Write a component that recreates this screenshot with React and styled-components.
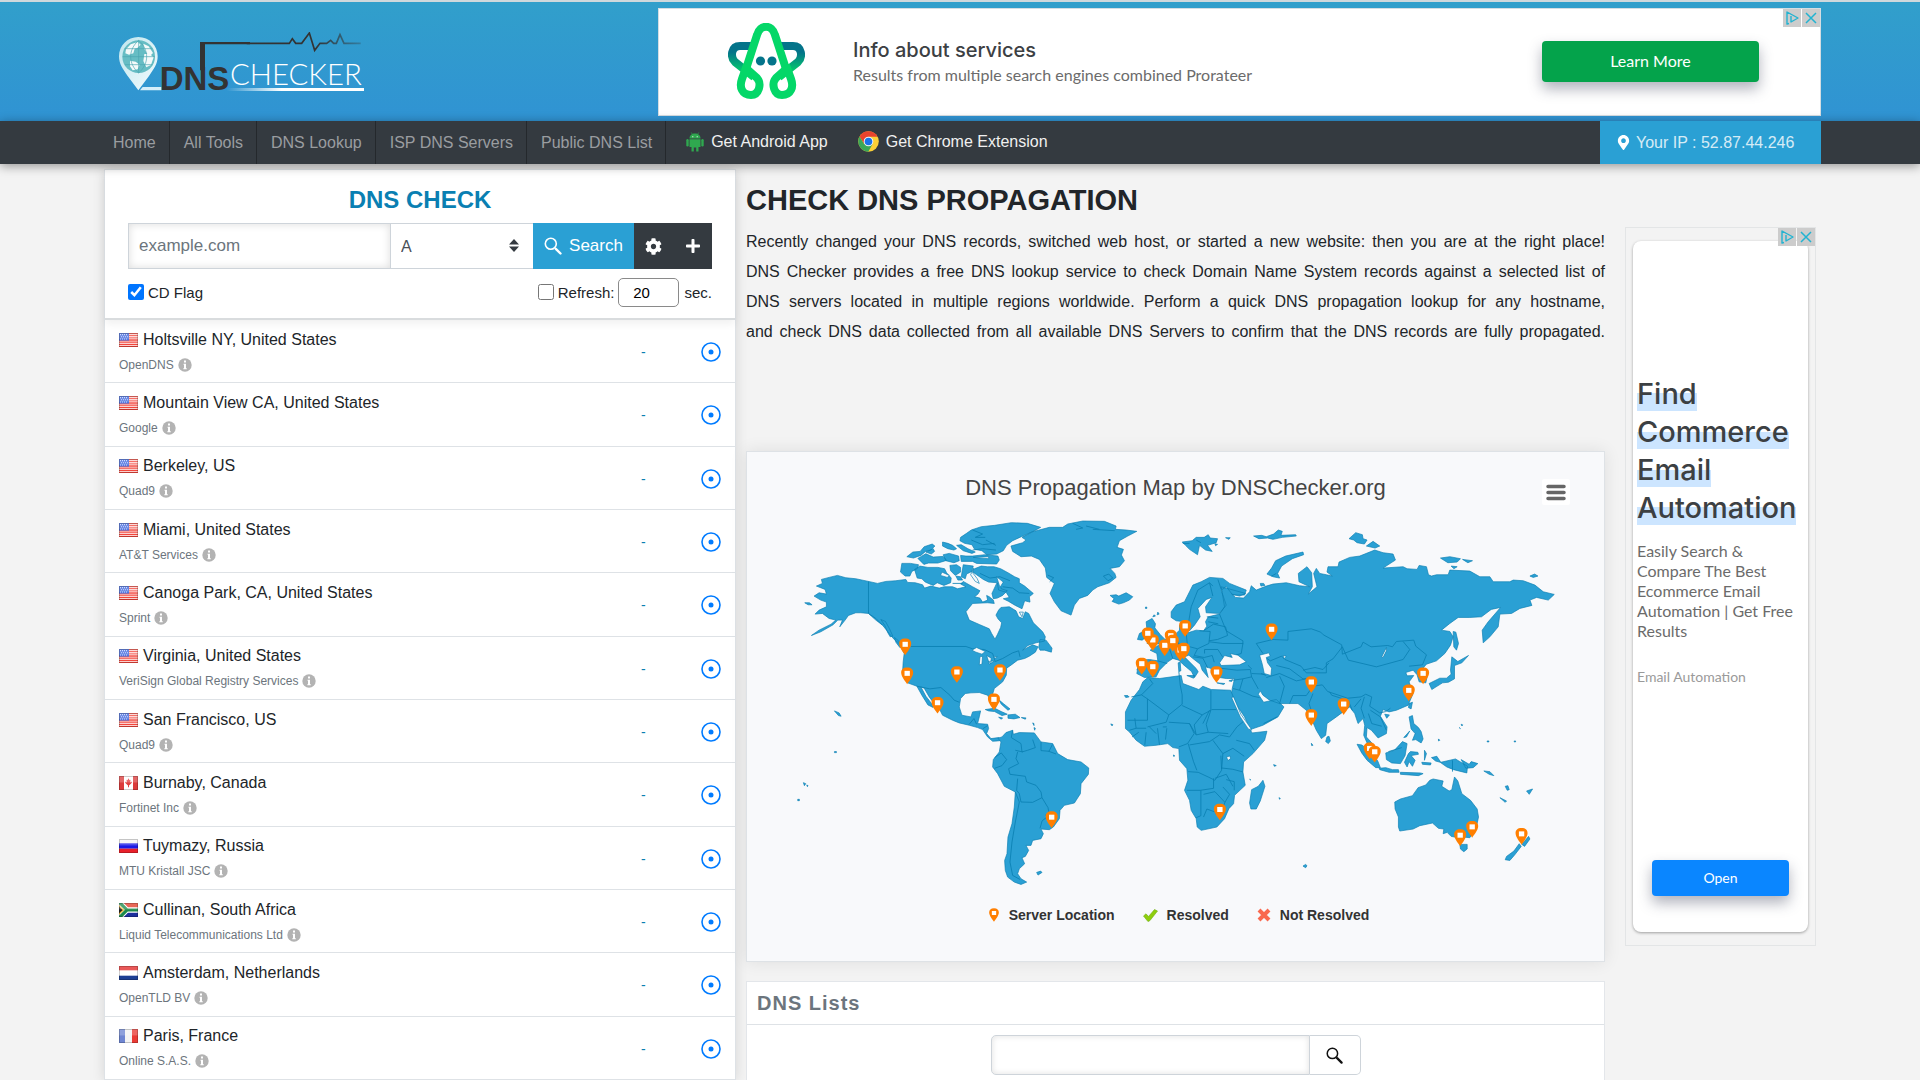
import React from 'react'
import styled, { createGlobalStyle } from 'styled-components'
import { FaCog, FaPlus, FaMapMarkerAlt } from 'react-icons/fa'

const COLORS = {
  blue: '#2aa0d4',
  darkBlue: '#0a7fb2',
  dark: '#343a40',
  border: '#dee2e6',
  text: '#212529',
  muted: '#6c757d',
  link: '#007bff',
  page: '#f3f3f3',
  map: '#f8f9fb',
}

const SANS = '"Liberation Sans", Arial, sans-serif'
const AD_FONT = 'Lato, "Open Sans", sans-serif'
const AD_HEADING = 'Inter, "Open Sans", sans-serif'

const GlobalStyle = createGlobalStyle`
  * {
    box-sizing: border-box;
  }

  body {
    margin: 0;
    color: ${COLORS.text};
    font-size: 16px;
    font-family: ${SANS};
    background: ${COLORS.page};
  }

  h1, h2, p, ul {
    margin: 0;
    padding: 0;
  }

  button, input, select {
    font-size: 16px;
    font-family: inherit;
  }
`

const Page = styled.div`
  height: 100vh;
  overflow: hidden;
`

const Header = styled.header`
  display: flex;
  align-items: center;
  height: 121px;
  padding: 0 99px 0 119px;
  background: linear-gradient(180deg, #319fcb, #3093d3);
  border-top: 2px solid #cfd8dc;

  .logo {
    display: block;
    flex: none;
    width: 246px;
    height: 60px;
  }
`

const Banner = styled.section`
  position: relative;
  display: flex;
  flex: 1;
  align-items: center;
  height: 108px;
  margin-left: 293px;
  padding: 0 61px 0 69px;
  font-family: ${AD_FONT};
  background: #fff;
  border: 1px solid #d5dde2;

  .mascot {
    width: 77px;
    height: 77px;
  }

  .copy {
    flex: 1;
    padding-left: 48px;
  }

  h2 {
    color: #3c4043;
    font-weight: 500;
    font-size: 20px;
    font-family: ${AD_HEADING};
    line-height: 26px;
  }

  p {
    color: #6b6b6b;
    font-size: 16px;
    line-height: 24px;
  }
`

const AdButton = styled.button`
  width: ${(props) => props.$width};
  height: ${(props) => props.$height};
  padding: 0 0 2px;
  color: #fff;
  font-size: ${(props) => props.$fontSize};
  font-family: ${AD_FONT};
  background: ${(props) => props.$color};
  border: 0;
  border-radius: 4px;
  box-shadow: 0 7px 14px rgba(60, 64, 90, 0.4);
`

const AdChoices = styled.div`
  position: absolute;
  top: 0;
  right: 0;
  display: flex;
  gap: 1px;

  button {
    display: flex;
    align-items: center;
    justify-content: center;
    width: 18px;
    height: 18px;
    padding: 0;
    background: #ccc;
    border: 0;
  }
`

const Nav = styled.nav`
  position: relative;
  z-index: 2;
  display: flex;
  align-items: stretch;
  height: 43px;
  padding: 0 99px;
  background: ${COLORS.dark};
  box-shadow: 0 2px 10px rgba(0, 0, 0, 0.4);
`

const NavLink = styled.a`
  display: flex;
  align-items: center;
  padding: 0 13px 0 14px;
  color: #9a9da0;
  text-decoration: none;
  border-right: 1px solid #24282c;
`

const AppLink = styled.a`
  display: flex;
  align-items: center;
  margin-left: ${(props) => props.$gap};
  padding-bottom: 2px;
  color: #f0f0f0;
  text-decoration: none;

  svg {
    margin-right: 7px;
  }
`

const IpBox = styled.div`
  display: flex;
  align-items: center;
  width: 221px;
  margin-left: auto;
  padding-left: 16px;
  color: #fff;
  background: ${COLORS.blue};

  svg {
    margin-right: 5px;
  }

  span {
    opacity: 0.8;
  }
`

const Main = styled.main`
  display: grid;
  grid-template-columns: minmax(0, 632fr) minmax(0, 869fr) 211px;
  align-items: start;
  padding: 0 104px;
`

const CheckPanel = styled.section`
  margin-top: 5px;
  background: #fff;
  border: 1px solid ${COLORS.border};
  box-shadow: 0 0 12px rgba(0, 0, 0, 0.12);
`

const CheckForm = styled.form`
  padding: 16px 23px 11px;
  border-bottom: 2px solid #d9dcde;
  box-shadow: 0 4px 8px rgba(0, 0, 0, 0.06);

  h2 {
    margin-bottom: 10px;
    color: ${COLORS.darkBlue};
    font-weight: bold;
    font-size: 24px;
    line-height: 27px;
    text-align: center;
  }
`

const SearchRow = styled.div`
  display: flex;
  height: 46px;

  input {
    flex: 1;
    min-width: 0;
    padding: 0 10px;
    font-size: 17px;
    border: 1px solid #ced4da;
    box-shadow: inset 0 0 8px rgba(0, 0, 0, 0.14);
  }

  input::placeholder {
    color: ${COLORS.muted};
  }
`

const SelectBox = styled.div`
  position: relative;
  width: 142px;

  select {
    width: 100%;
    height: 100%;
    padding: 0 10px;
    color: #495057;
    font-size: 16px;
    background: #fff;
    border: 1px solid #ced4da;
    border-width: 1px 0;
    appearance: none;
  }

  svg {
    position: absolute;
    top: 16px;
    right: 14px;
    pointer-events: none;
  }
`

const SearchButton = styled.button`
  display: flex;
  align-items: center;
  justify-content: center;
  gap: 7px;
  width: 101px;
  padding: 0;
  color: #fff;
  font-size: 17px;
  background: ${COLORS.blue};
  border: 0;
`

const ToolButton = styled.button`
  width: 39px;
  padding: 4px 0 0;
  color: #fff;
  background: ${COLORS.dark};
  border: 0;
`

const OptionsRow = styled.div`
  display: flex;
  align-items: center;
  height: 30px;
  margin-top: 8px;
  font-size: 15px;

  label {
    display: flex;
    align-items: center;
    gap: 4px;
  }

  label:first-child {
    margin-right: auto;
  }

  input[type='checkbox'] {
    width: 16px;
    height: 16px;
    margin: 0;
    accent-color: #0075ff;
  }

  input[type='number'] {
    width: 61px;
    height: 29px;
    margin: 0 5px 0 4px;
    padding: 0;
    font-size: 15px;
    text-align: center;
    background: #fff;
    border: 1px solid #8a8a8a;
    border-radius: 5px;
    appearance: textfield;
  }
`

const ServerList = styled.ul`
  display: grid;
  grid-auto-rows: 1fr;
  min-height: 760px;
  list-style: none;
`

const ServerRow = styled.li`
  display: flex;
  align-items: center;
  padding: 2px 14px 0 14px;
  border-bottom: 1px solid ${COLORS.border};

  .info {
    flex: 1;
  }

  .name {
    display: flex;
    align-items: center;
    gap: 5px;
    line-height: 24px;
  }

  .owner {
    display: flex;
    align-items: center;
    gap: 4px;
    margin-top: 1px;
    color: ${COLORS.muted};
    font-size: 12px;
    line-height: 24px;
  }

  .result {
    width: 60px;
    color: ${COLORS.darkBlue};
    font-size: 14px;
  }
`

const Content = styled.section`
  margin-left: 10px;

  h1 {
    margin-top: 20px;
    font-size: 29px;
    line-height: 32px;
  }

  .intro {
    height: 209px;
    margin-top: 11px;
    line-height: 30px;
    text-align: justify;
    text-align-last: justify;
  }
`

const MapCard = styled.figure`
  position: relative;
  margin: 15px 0 0;
  padding: 22px 0 36px;
  background: ${COLORS.map};
  border: 1px solid ${COLORS.border};
  box-shadow: 0 0 16px rgba(0, 0, 0, 0.09);

  figcaption {
    color: #444;
    font-size: 22px;
    line-height: 28px;
    text-align: center;
  }

  .map {
    display: block;
    width: 100%;
    margin-top: 13px;
  }
`

const MenuButton = styled.button`
  position: absolute;
  top: 27px;
  right: 34px;
  display: flex;
  align-items: center;
  justify-content: center;
  width: 28px;
  height: 26px;
  padding: 0;
  background: #fff;
  border: 0;
  border-radius: 2px;
`

const Legend = styled.div`
  display: flex;
  justify-content: center;
  margin-top: 15px;
  padding-left: 6px;
  color: #333;
  font-weight: bold;
  font-size: 14px;
  line-height: 20px;

  span {
    display: flex;
    align-items: center;
    gap: 9px;
  }

  span + span {
    margin-left: 28px;
  }
`

const ListsCard = styled.section`
  height: 140px;
  margin-top: 19px;
  background: #fff;
  border: 1px solid #e3e6ea;

  h2 {
    padding: 0 10px;
    color: ${COLORS.muted};
    font-size: 20px;
    line-height: 42px;
    letter-spacing: 1px;
    border-bottom: 1px solid ${COLORS.border};
  }

  form {
    display: flex;
    width: 370px;
    height: 40px;
    margin: 10px auto 0;
  }

  input {
    flex: 1;
    min-width: 0;
    border: 1px solid #ced4da;
    border-radius: 5px 0 0 5px;
    box-shadow: inset 0 0 6px rgba(0, 0, 0, 0.12);
  }

  button {
    width: 51px;
    padding: 4px 0 0;
    background: #fff;
    border: 1px solid #ced4da;
    border-left: 0;
    border-radius: 0 5px 5px 0;
  }
`

const SideAd = styled.aside`
  position: relative;
  margin: 63px 0 0 20px;
  padding: 13px 7px;
  border: 1px solid #e3e5e6;

  .card {
    display: flex;
    flex-direction: column;
    align-items: flex-start;
    height: 691px;
    padding: 134px 4px 36px;
    font-family: ${AD_FONT};
    background: #fff;
    border-radius: 8px;
    box-shadow: 0 1px 3px rgba(0, 0, 0, 0.35);
  }

  h2 {
    color: #3c4043;
    font-weight: 500;
    font-size: 29px;
    font-family: ${AD_HEADING};
    line-height: 38px;
  }

  h2 span {
    background: linear-gradient(transparent 50%, #cce5ff 50%);
  }

  p {
    margin-top: 14px;
    color: #6b6b6b;
    font-size: 16px;
    line-height: 20px;
  }

  small {
    margin-top: 26px;
    color: #9a9a9a;
    font-size: 14px;
    line-height: 20px;
  }

  .card > button {
    align-self: center;
    margin-top: auto;
  }
`

const navItems = [
  'Home',
  'All Tools',
  'DNS Lookup',
  'ISP DNS Servers',
  'Public DNS List',
]

const servers = [
  { flag: 'us', name: 'Holtsville NY, United States', owner: 'OpenDNS' },
  { flag: 'us', name: 'Mountain View CA, United States', owner: 'Google' },
  { flag: 'us', name: 'Berkeley, US', owner: 'Quad9' },
  { flag: 'us', name: 'Miami, United States', owner: 'AT&T Services' },
  { flag: 'us', name: 'Canoga Park, CA, United States', owner: 'Sprint' },
  {
    flag: 'us',
    name: 'Virginia, United States',
    owner: 'VeriSign Global Registry Services',
  },
  { flag: 'us', name: 'San Francisco, US', owner: 'Quad9' },
  { flag: 'ca', name: 'Burnaby, Canada', owner: 'Fortinet Inc' },
  { flag: 'ru', name: 'Tuymazy, Russia', owner: 'MTU Kristall JSC' },
  {
    flag: 'za',
    name: 'Cullinan, South Africa',
    owner: 'Liquid Telecommunications Ltd',
  },
  { flag: 'nl', name: 'Amsterdam, Netherlands', owner: 'OpenTLD BV' },
  { flag: 'fr', name: 'Paris, France', owner: 'Online S.A.S.' },
]

const flags = {
  us: (
    <>
      <path fill="#fff" d="M0 0h19v13H0z" />
      <path
        stroke="#f2463c"
        strokeWidth="1.200"
        d="M0 .5h19M0 2.500h19M0 4.500h19M0 6.500h19M0 8.500h19M0 10.500h19M0 12.500h19"
      />
      <path fill="#3f66dc" d="M0 0h10v7H0z" />
      <path
        stroke="#c5d4ff"
        strokeDasharray="1 1"
        d="M1 1.500h8M2 3.500h7M1 5.500h8"
      />
    </>
  ),
  ca: (
    <>
      <path fill="#fff" d="M0 0h19v13H0z" />
      <path fill="#dc3b3b" d="M0 0h5v13H0zM14 0h5v13h-5z" />
      <path
        fill="#e04040"
        d="M9.500 2l1 2 1-.5-.3 2.500 1.800-1-.4 1.500-2.300 2H10v2H9v-2H8.700l-2.300-2L6 5l1.800 1-.3-2.500 1 .5z"
      />
    </>
  ),
  ru: (
    <>
      <path fill="#f5f5f5" d="M0 0h19v5H0z" />
      <path fill="#1a1ae6" d="M0 4h19v5H0z" />
      <path fill="#e8202a" d="M0 9h19v4H0z" />
    </>
  ),
  za: (
    <>
      <path fill="#e23d28" d="M0 0h19v5H0z" />
      <path fill="#1c2f9c" d="M0 8h19v5H0z" />
      <path
        fill="none"
        stroke="#fff"
        strokeWidth="5"
        d="M0-1l8 7.500h11M0 14l8-7.500"
      />
      <path
        fill="none"
        stroke="#1d8a4a"
        strokeWidth="3"
        d="M0-1l8 7.500h11M0 14l8-7.500"
      />
      <path fill="#222" stroke="#f0b92d" d="M-1 2l5.500 4.500L-1 11z" />
    </>
  ),
  nl: (
    <>
      <path fill="#e32a2a" d="M0 0h19v5H0z" />
      <path fill="#fff" d="M0 4h19v5H0z" />
      <path fill="#1d3f94" d="M0 9h19v4H0z" />
    </>
  ),
  fr: (
    <>
      <path fill="#6f86d2" d="M0 0h7v13H0z" />
      <path fill="#f4f4f4" d="M6 0h7v13H6z" />
      <path fill="#ea3a34" d="M13 0h6v13h-6z" />
    </>
  ),
}

function Flag({ code }) {
  return (
    <svg width="19" height="14" viewBox="0 0 19 13" preserveAspectRatio="none">
      {flags[code]}
      <path fill="#fff" opacity=".22" d="M0 0h19v6H0z" />
      <path
        fill="none"
        stroke="#000"
        strokeOpacity=".2"
        d="M.5.5h18v12H.5z"
      />
    </svg>
  )
}

function InfoIcon() {
  return (
    <svg width="14" height="14" viewBox="0 0 14 14" aria-hidden="true">
      <circle cx="7" cy="7" r="6.700" fill="#b3b3b3" />
      <path fill="#fff" d="M6 2.500h2v2H6zM5.500 5.700H8v4.500h.8v1H5.300v-1H6V6.700h-.5z" />
    </svg>
  )
}

function TargetIcon() {
  return (
    <svg width="20" height="20" viewBox="0 0 20 20" aria-hidden="true">
      <circle
        cx="10"
        cy="10"
        r="9"
        fill="none"
        stroke={COLORS.link}
        strokeWidth="1.600"
      />
      <circle cx="10" cy="10" r="2.500" fill={COLORS.link} />
    </svg>
  )
}

function SearchIcon({ size, color }) {
  return (
    <svg width={size} height={size} viewBox="0 0 18 18" aria-hidden="true">
      <circle
        cx="6.800"
        cy="6.800"
        r="5.500"
        fill="none"
        stroke={color}
        strokeWidth="1.600"
      />
      <path
        stroke={color}
        strokeWidth="2.400"
        strokeLinecap="round"
        d="M11.800 11.800l4.700 4.700"
      />
    </svg>
  )
}

function Choices() {
  return (
    <AdChoices>
      <button type="button" aria-label="AdChoices">
        <svg width="14" height="14" viewBox="0 0 14 14">
          <path
            fill="none"
            stroke="#22b3d1"
            strokeWidth="1.400"
            strokeLinejoin="round"
            d="M4 12.500l-2 .5V1l11 6-7 4V5M6 3.500v.2"
          />
        </svg>
      </button>
      <button type="button" aria-label="Close ad">
        <svg width="12" height="12" viewBox="0 0 12 12">
          <path stroke="#22b3d1" strokeWidth="1.500" d="M1 1l10 10M11 1L1 11" />
        </svg>
      </button>
    </AdChoices>
  )
}

function Logo() {
  return (
    <svg className="logo" viewBox="57 60 738 180" role="img">
      <defs>
        <linearGradient id="pin" x1="0" y1="0" x2="1" y2="1">
          <stop offset="0" stopColor="#bfe6ee" />
          <stop offset="1" stopColor="#f2fbfd" />
        </linearGradient>
        <linearGradient id="fade">
          <stop offset="0" stopColor="#fff" stopOpacity="0" />
          <stop offset=".4" stopColor="#fff" />
        </linearGradient>
        <linearGradient id="pulse">
          <stop offset=".6" stopColor="#333" />
          <stop offset="1" stopColor="#333" stopOpacity=".3" />
        </linearGradient>
      </defs>
      <path
        fill="url(#pin)"
        d="M115 75c-33 0-58 26-58 58 0 24 12 38 26 59l32 43 32-43c14-21 26-35 26-59 0-32-25-58-58-58z"
      />
      <circle cx="116" cy="134" r="49" fill="#66bdc4" />
      <path
        fill="#f4fafa"
        d="M78 112l14-15 22-7 8 8-10 10-8 2-4 14-13 4-11-4zM130 95l16 8 13 20-6 6-12-4-8-14zM90 146l17 3 12 9-6 14-15 3-8-12zM133 126h16l12 10-8 23-14 7-9-19z"
      />
      <path
        fill="none"
        stroke="#4aa6b0"
        strokeWidth="2"
        d="M68 134h96M74 110h83M74 158h83M116 85v98M116 85c-32 28-32 70 0 98M116 85c32 28 32 70 0 98"
      />
      <path fill="#d4eefa" d="M120 235l8-10h56v10z" />
      <path fill="url(#fade)" d="M380 228h412v9H380z" />
      <path fill="#333" d="M300 90h150v7H315v78h-15z" />
      <path
        fill="none"
        stroke="url(#pulse)"
        strokeWidth="5"
        d="M440 94h128l9-14 10 14h18l23-31 16 52 16-21h20l12-9 9 9h8l11-26 12 26h50"
      />
      <text
        x="179"
        y="234"
        fill="#333"
        fontFamily={SANS}
        fontSize="99"
        fontWeight="bold"
      >
        DNS
      </text>
      <text
        x="390"
        y="218"
        fill="#fff"
        fontFamily="Lato, sans-serif"
        fontSize="88"
        fontWeight="300"
      >
        CHECKER
      </text>
    </svg>
  )
}

function Mascot() {
  return (
    <svg className="mascot" viewBox="0 0 77 77" aria-hidden="true">
      <defs>
        <linearGradient id="teal" x1="0" y1="0" x2="0" y2="1">
          <stop offset=".2" stopColor="#04748a" />
          <stop offset=".9" stopColor="#04d768" />
        </linearGradient>
      </defs>
      <g fill="none" strokeLinejoin="round" strokeWidth="8">
        <path
          stroke="url(#teal)"
          d="M26 23H12C3 23 2 34 7 39l19 15M51 23h14c9 0 10 11 5 16L51 54"
        />
        <path stroke="#04d768" d="M17 49L29 12c3-11 15-11 18 0l12 37" />
        <path
          stroke="#04d768"
          d="M20 47l9 8c5 6 2 17-6 17-9 0-12-8-9-16l5-14M57 47l-9 8c-5 6-2 17 6 17 9 0 12-8 9-16l-5-14"
        />
      </g>
      <circle cx="32.500" cy="38" r="4.600" fill="#04748a" />
      <circle cx="44" cy="38" r="4.600" fill="#04748a" />
    </svg>
  )
}

function AndroidIcon() {
  return (
    <svg width="18" height="20" viewBox="0 0 18 20" aria-hidden="true">
      <g fill="#2fa84f">
        <path d="M3.500 6.500C3.500 3 6 1.500 9 1.500s5.500 1.500 5.500 5z" />
        <path d="M3.500 7.300h11V15h-2v4.500h-2.300V15.500H7.800v4H5.500V15h-2z" />
        <rect x="0.300" y="7" width="2.400" height="7.500" rx="1.200" />
        <rect x="15.300" y="7" width="2.400" height="7.500" rx="1.200" />
      </g>
      <path stroke="#2fa84f" strokeWidth=".7" d="M5.300.5l1.200 2M12.700.5l-1.200 2" />
      <path fill="#fff" d="M6.300 4.200h1v1h-1zM10.700 4.200h1v1h-1z" />
    </svg>
  )
}

function ChromeIcon() {
  return (
    <svg width="21" height="21" viewBox="0 0 21 21" aria-hidden="true">
      <circle cx="10.500" cy="10.500" r="10.300" fill="#fcd036" />
      <path
        fill="#e8432e"
        d="M1.500 5.500A10.300 10.300 0 0 1 19.600 5.700h-9.100l-4.400 7z"
      />
      <path
        fill="#3aa757"
        d="M1.500 5.500l4.600 7.500 8.400.3-4.200 7.400A10.300 10.300 0 0 1 1.500 5.500z"
      />
      <circle cx="10.500" cy="10.500" r="4.800" fill="#f4f4f4" />
      <circle cx="10.500" cy="10.500" r="3.800" fill="#1a73e8" />
    </svg>
  )
}

// Every region is drawn around an origin of its own, see "move"
const regions = [
  {
    id: 'north-america',
    move: 'translate(0 0)',
    land: [
      'M232 438L250 430 247 418 270 412 295 406 320 413 350 416 388 424 415 430 440 424 470 422 500 418 505 427 528 428 550 434 556 444 575 438 600 444 615 440 640 440 655 446 680 440 664 432 672 424 700 440 722 452 716 462 706 470 722 474 730 486 745 480 742 466 750 470 762 480 765 490 745 488 700 490 680 515 690 540 720 553 750 566 757 580 767 597 774 584 784 562 787 548 776 536 770 525 778 510 785 502 810 500 830 512 838 530 850 535 858 515 868 520 882 548 910 575 918 590 915 603 890 608 866 616 850 630 880 614 896 620 888 636 870 648 856 655 835 660 815 675 802 684 801 705 790 725 765 745 760 762 772 788 769 803 760 795 745 765 720 757 695 758 678 760 664 775 660 800 668 825 695 830 700 815 724 812 720 830 715 850 745 852 748 865 742 880 755 895 778 892 790 900 775 902 760 903 745 890 730 868 715 862 690 855 660 848 640 840 610 825 600 805 585 790 570 770 555 744 545 740 560 768 577 790 582 802 566 794 548 765 533 738 505 728 490 700 492 665 495 640 480 610 465 598 450 580 430 555 410 540 388 520 365 518 350 518 328 526 318 540 302 560 310 540 296 540 282 554 245 575 217 586 240 570 276 552 290 540 270 535 250 520 228 522 240 510 262 500 262 486 245 480 225 468 240 458 262 462 258 448Z',
      'M197 488l14 0 8 6-12 0z',
      'M425 538l14 6 12 22 10 22-8 2-8-14-8-20z',
      'M466 592l12 10 12 18-8 2-12-16z',
      'M503 350l18-14 22-2 12-14 24-8 8 6-12 12-16 4-14 12-22 8z',
      'M536 355l24-14 22 10 30-2 10 12-26 8-28 0-14 4z',
      'M610 306l16 4 14 6 12 10-8 4-18-4-16-8zM652 316l14-2 20 12 22 10-10 4-26-8z',
      'M612 344l18-4 28 8 2 14-16 6-24-6zM560 336l22-10 4 8-10 8z',
      'M664 292l18-12 14-10 30-10 40-4 50-8 48 2 40 12-18 10-40 18-26 12-18 14-10 16-20 10-30 2-14-12-22-4-8-14-22-4-14-8z',
      'M664 346l16 2 20 0 36-4 40 4 4 12-8 12-60-2-12-6-34 0z',
      'M488 370l26 0 24 4-4 12-16 8-6 14-14 0-14-12z',
      'M526 388l16-10 24 4 30 0 20 4 6 12 14 16-2 14-20 8-20-8-12 8-24-10-10-10-14-2z',
      'M632 376l20-2 12 8 0 14-16 10-14-14z',
      'M672 374l30 4-4 16-16 8-4 14-12-6zM650 408l14 2 6 10-14 0z',
      'M706 386l20-8 18 2 20 0 20 6 22 12 20 12 14 6 0 12 16 10 26 22-12 10 2 16-16-4-8 24-20-10-20-12-16-8 18-4-10-16-22-6-4-22-26-2-16-8-20-14-14-10z',
      'M758 460l14-30 10 0 4 16 18 6-14 14-16 8-12 2z',
      'M815 318L850 308 860 300 848 292 880 275 930 262 970 262 985 252 1030 243 1095 244 1130 258 1128 268 1160 270 1192 274 1165 288 1140 302 1133 322 1152 328 1146 345 1155 362 1140 380 1112 385 1126 400 1130 412 1110 428 1075 440 1060 450 1045 466 1020 475 1005 495 995 525 965 512 945 485 932 460 945 430 922 412 918 384 900 358 876 348 845 350 820 334Z',
      'M1112 466l18-2 8 4 22-10 20 12-10 10-18 8-14 4-20-8 6-8z',
      'M902 598l18 2 18 24-2 12-20-6-14 0-4-8z',
      'M738 808l28-4 20 10 18 8-16 4-22-12-18-2zM806 824l22-2 14 10-18 4-18-2zM778 831l12 2-4 4zM846 832l14 1-2 4zM778 778l14 12 20 16-6 4-20-18z',
      'M286 812l14 6 6 10-8-2zM286 934h6v3h-6zM193 1027l7 3-4 6zM203 1034l4 2-2 3zM176 1077h5v4h-5z',
      'M1155 766l10 0 4 4-10 2zM1114 851l6 2-2 4zM880 848l4 2 0 6zM884 862l4 2-2 6z',
    ],
    borders: [
      'M388 424V520L410 535 430 555M515 619H680L700 626 735 628M735 628L760 640 768 664 790 655 820 638 838 632 842 650M533 738L572 746 605 742 632 765 645 780 660 786M690 852L704 835 712 852M730 866L745 856',
      'M700 270l30 12-22 10 30 0M696 300l34 14 36-4M740 300l30 16M700 330l30-4 40 4M640 430l30 0M722 400l30 14 30-4 30 12M790 440l30 4 20 14 30 2',
      'M1000 250l30 14-20 4M1040 258l40 10M1060 268l66 4M925 405l18 8-12 12M1092 408l16-6 12 12-14 8z',
    ],
    lakes: [
      'M698 630l14-8 26 12-10 8-18-6zM722 650l8-2-2 24-8 2zM742 646l14 8-2 16-6-6zM748 664l18-2-16 10zM762 650l12-1-6 5z',
      'M608 396l22 10-6 6-20-6zM704 384l-4 14 14 18 6 14-12-6-14-20zM748 350l-46 2 46 4z',
      'M772 410l20 16-10 16zM840 516l12 0-4 14z',
    ],
  },
  {
    id: 'south-america',
    move: 'translate(0 780)',
    land: [
      'M776 114L788 110 800 97 820 90 822 102 840 97 885 98 905 125 940 130 955 160 985 178 1025 185 1048 203 1047 222 1025 250 1023 280 1005 308 975 315 962 330 960 355 942 380 930 388 905 386 912 400 905 415 880 420 875 435 860 435 868 450 858 468 848 472 856 490 840 505 835 520 845 535 862 545 845 552 825 545 805 530 798 510 796 480 803 460 806 410 818 370 825 320 828 275 795 258 775 220 760 200 762 178 780 155 785 125Z',
      'M892 516l12-4 4 4-12 8z',
    ],
    borders: [
      'M820 90L816 112 845 130 848 155 865 150 888 142 880 118M835 155L830 175 838 190 808 205 812 222 858 228 862 245 890 255 905 275 908 292 880 306 845 305 840 280 832 270 835 235M828 150L850 155M766 172l20-14 16 20-14 18-22 8M828 275l12 30-12 60-10 60-6 60 8 40 22 12M908 292l18 30 4 22-22 18-6 22M905 125l0 26 24 2 10-20M928 153l22 8M918 344l20 10',
    ],
    lakes: [],
  },
  {
    id: 'eurasia',
    move: 'translate(1170 0)',
    land: [
      'M30 660L60 658 85 662 82 640 62 630 82 618 95 612 115 590 140 580 150 570 150 555 160 546 166 565 175 578 200 570 222 572 232 558 228 545 236 530 270 522 285 500 280 470 275 440 348 460 330 468 306 462 318 472 342 474 360 455 365 437 380 450 410 438 430 432 470 428 510 437 540 440 508 425 506 400 532 380 546 398 548 440 536 462 562 440 552 400 560 385 570 400 590 404 608 408 592 396 595 380 625 380 628 366 660 352 690 348 735 330 760 338 790 342 797 360 760 384 820 380 832 386 862 388 868 376 890 380 896 404 905 408 920 404 955 404 960 390 1020 393 1050 410 1080 410 1090 425 1140 425 1150 420 1180 422 1215 435 1240 455 1273 463 1255 480 1220 472 1200 480 1206 496 1170 505 1145 520 1110 522 1105 560 1080 590 1060 608 1057 570 1075 545 1112 502 1084 508 1055 530 1020 532 985 532 960 550 935 570 960 574 970 590 962 615 945 640 920 662 890 672 876 688 892 710 888 728 868 725 862 704 850 690 828 697 832 707 852 706 838 725 850 760 835 795 800 810 778 815 760 808 752 828 772 860 770 880 745 893 725 870 712 862 710 890 728 910 738 940 715 915 702 885 705 855 700 835 685 850 675 820 660 800 640 815 620 830 592 850 588 885 575 895 560 870 545 835 530 810 505 790 450 790 420 780 400 765 392 752 386 762 402 786 440 778 463 800 445 830 400 855 362 868 345 830 315 785 305 765 308 745 315 715 290 715 270 712 245 700 245 685 228 680 236 712 218 690 212 672 190 655 178 645 165 650 200 685 206 695 195 712 186 694 160 672 148 660 130 655 115 665 90 690 80 710 45 712 22 700Z',
      'M125 515L140 495 165 485 180 455 190 435 215 425 240 412 280 415 300 430 350 450 345 465 310 465 290 440 275 450 290 495 270 520 230 518 228 500 247 472 230 478 205 505 212 530 195 555 180 572 165 545 140 542 125 532Z',
      'M50 545l18-10 10 16-2 12 16 20 14 14-8 12-34 6-12-6 12-8-8-14 6-8-10-14z',
      'M30 580l18-10 6 18-16 12-14-2z',
      'M158 306l30-4 12-10 24 0 12-8 6 10 22 2-4 12-26 8 14 18-20-4-18-14-6 28-24-16-12-12z',
      'M372 288l24-2 14 4 22-8 14-12 12 4-4 12 44-2 2 4-42 4-28 6-16-4-26 2zM288 293l14 0-4 5zM256 311l8 2-6 4z',
      'M412 402l14-18 12-22 30-14 52-12 2 8-34 12-32 22-12 22 6 14-20-4z',
      'M658 296l20-18 20 6 2 12 12 4-8 12-22-4-10-8zM710 318l20-14 20 14-14 6zM932 354l28-4 32 6-10 10-28 2zM998 358l30 4-14 6zM964 378l18 2-10 6zM1200 408l14-6 10 6-14 4z',
      'M970 574l8 2 8 34-6 20-8-10z',
      'M962 690l4-40 18 14 32-18-20 22-22 8 0 40-18 10-18 2-32 20-8-18 32-16 20 0 14-12z',
      'M592 890l6-2 4 14-6 8-8-6zM838 790l10-4-4 20-8-4zM765 822l14 2-8 10z',
      'M146 668l6-2 2 26-6 2zM172 706l24 0-4 8zM262 728l24 2-4 3zM298 722l12-4-4 6zM70 530l4-6 4 4zM48 501h4v4h-4zM85 516l4 6-6 2zM392 430l10 0 4 6-12 2z',
      'M682 912l14 2 26 18 22 30 8 20-14 0-26-22-16-22z',
      'M768 938l26-8 24-26 14 6-6 36-14 24-26-2-16-10z',
      'M836 940l6-6 22 2 2 6-22 4 12 14-8 18-10-14-6 16-8-14zM884 930l6 10-6 20zM876 966l28 2-2 6-24-2z',
      'M838 830l10-4 4 24 14 12 8 12 6 22-6 12-16-10-10 2 8-20-12-14zM822 892l18-20-10 18z',
      'M905 952l16-4 12 18 44-10 36 22-2 20-40-10-20-8-20-14-14-4zM994 958l24 14 6-8 20 6-14 12-22 2z',
      'M545 909l5 6-4 1zM432 973l8 3-6 2zM926 896l4 4-4 2zM988 862l4 3zM994 852l5 2-3 3zM1072 902h5v3h-5zM1153 902h4v3h-4z',
    ],
    borders: [
      'M175 560l10-60 20-50 35-22 10 10M240 428l10 40M265 418l10 30M85 662l28 8M130 655l-14-40-12-8M140 582l8 30-10 30M170 578l4 40 30 8 34-16 4-36-32-2M174 618l-26-6M204 626l-10 20 30 6 24-6 6 20M240 605l40 5 60 0-5 30-35 10M222 572l30-20 36 8 6 26-30 12-26 4M236 545l30 6M232 530l34 4M270 522l20 50 50 30 0 10M225 640l0-12 40 0 14 22M190 650l30 4 14 28M60 690l2-30M22 690l16-30',
      'M400 640l-20-30 50-12 45 2 0-26 70-8 28 10 8 8 55 30 2 28 56-22 6-14 24 14 50-4 14 4 12-16 52-4 6 18 32 26-12 30-40 4M638 620l18 40 84 20 80-22 20-30-20-24M638 620l-28 36-20 12 0 30-60 0-16-20-48-20-10-10-34 14-16-12-6 20M440 676l40 10 40 30 30-2 6 12M410 712l40-12 50 22 40-8M450 790l14-52-14-30M480 790l10-24 40 0 20-28 28-4 16 20 60 20 40-4 14-8 18 8-6 28 30 20 18-4 14-10M548 820l-10-30 12-30M600 755l6 10 50 16 12 30M674 800l20-24M704 770l-10 34 10 30M722 810l30 20 18 40M716 820l10 30 30 8M310 720l30-4 26-6-4-22-40 2-50-6M366 710l20 36M340 716l-10 34 40 18 20 4M310 745l20 5M366 700l40 2M355 675l12 12M402 850l40-20M410 706l-16-6M520 690l36-8 24 6 18-20',
      'M160 310l20 0M200 300l14 8M968 960v34M776 934l40-12M440 400l-14 8',
    ],
    lakes: [
      'M270 668L285 646 308 652 302 640 325 645 350 665 330 674 275 676Z',
      'M390 645L418 638 422 648 410 652 414 668 426 684 424 706 404 700 398 672Z',
      'M460 646l10 2-6 8zM756 650l14-28 0 10-10 20z',
    ],
  },
  {
    id: 'southern',
    move: 'translate(1170 780)',
    land: [
      'M55-68L90-65 155-74 160-50 208-32 220-42 245-32 303-30 312-8 335 50 358 84 368 98 412 93 405 120 370 160 342 185 340 215 347 255 315 285 312 310 298 325 285 355 262 380 215 390 203 380 200 355 185 330 180 300 165 270 175 240 172 205 150 180 148 145 130 142 115 130 80 135 45 138 20 120 0 95-12 85-12 35 5 0 30-32 40-55Z',
      'M400 240l6 18-14 44-12 24-16 0-4-18 6-40 20-10z',
      'M795 305L812 296 848 286 865 262 888 254 900 240 910 236 940 242 936 258 958 272 966 268 974 230 984 242 996 280 1022 300 1042 326 1046 350 1040 378 1020 412 1000 410 984 412 964 408 952 396 940 400 942 386 926 384 908 368 870 376 850 386 810 392 806 380 806 350 796 326Z',
      'M990 432l22 0 0 14-10 8-10-8z',
      'M1176 432l20-24 4 8-16 22zM1168 430l6 8-20 26-14 16-14-2 4-10 22-16z',
      'M748 204l20-2 20 6 18 0 2 8-30 0-28-8zM812 216l60 2 8 2-14 6-54-4z',
      'M1062 212l18 2 12 12-14-4zM1126 258l8-2 4 12-6 2zM1110 292l20 10-4 4zM1190 272l18-6-10 16zM520 497l8-5 4 4-4 6z',
      'M360 237l4 2zM448 292l4 2-2 3zM132 164l4 3-4 1z',
    ],
    borders: [
      'M60-64l10 14-34 34-30 6M36-16l18 12v64M54-4l64 48 40-32 0-28-6-30-4-40M118 44l-8 22-56 14M54 60l-60 0M158 16l60 28 26-14V-30M246 28h74M218 44l-24 30 6 30 36-8 60 4M236 96l-6-24 14-42M300 110l22-30 24-20M300 110l-30-6-30 20-60 10M118 66l62 4 14 30-20 30-26 10M112 84l-4 34M84 84l6 50M50 96l-4 38M20 84l30 0M0 90l20-6-4-30M100 80l12 0M176 130l16 54 10 26M250 120l30 40-4 50-20 30-20-10-30-14-30-2M320 120l40 10 14 20M280 160l30-16 34 24M276 206l-2-40M340 215l-30-8-34-4M172 270l40 0 40-6 0-30M214 270l0 76M214 346l-14 6M222 282l34-8 30 32-8 22-24 6-22-8-10 24M290 238l24 6 0 26M256 234l34-12 20 36M286 306l14-24-20-22M180 70l20 34M8 110l20-14M240 30l-20 40M60 80l20 20',
      'M258 340l14 0-2 10z',
    ],
    lakes: ['M291 170l10-3 2 8-8 6zM306-8L312-10 334 42 362 82 366 90 356 86 332 50z'],
  },
]

// Tip of every pin, in the map's own units
const pins = [
  [498, 645],
  [504, 732],
  [653, 728],
  [782, 722],
  [764, 810],
  [595, 820],
  [1240, 632],
  [1225, 612],
  [1294, 619],
  [1276, 648],
  [1322, 662],
  [1300, 634],
  [1337, 590],
  [1333, 658],
  [1207, 703],
  [1240, 712],
  [1431, 728],
  [1596, 600],
  [1715, 758],
  [1812, 824],
  [1715, 857],
  [2007, 783],
  [2050, 732],
  [1890, 957],
  [1905, 967],
  [1441, 1140],
  [2197, 1192],
  [2161, 1217],
  [2345, 1213],
  [937, 1163],
]

const PIN_PATH = 'M0 0C-4-6-18-22-18-34c0-10 6-16 18-16s18 6 18 16C18-22 4-6 0 0z'

function WorldMap() {
  return (
    <svg className="map" viewBox="24 225 2568 1125" role="img">
      {regions.map(({ id, move, land, borders, lakes }) => (
        <g key={id} transform={move} strokeLinejoin="round">
          <path
            d={land.join('')}
            fill={COLORS.blue}
            stroke={COLORS.darkBlue}
            strokeWidth="2"
          />
          <path
            d={borders.join('')}
            fill="none"
            stroke={COLORS.darkBlue}
            strokeWidth="2.500"
          />
          <path
            d={lakes.join('')}
            fill={COLORS.map}
            stroke={COLORS.darkBlue}
            strokeWidth="2"
          />
        </g>
      ))}
      {pins.map(([x, y]) => (
        <g key={`${x}-${y}`} transform={`translate(${x} ${y})`}>
          <path d={PIN_PATH} fill="#ff7f00" />
          <path d="M-8-40H8v15H-8z" fill="#fff" />
        </g>
      ))}
    </svg>
  )
}

function App() {
  return (
    <Page>
      <GlobalStyle />

      <Header>
        <Logo />
        <Banner>
          <Mascot />
          <div className="copy">
            <h2>Info about services</h2>
            <p>Results from multiple search engines combined Prorateer</p>
          </div>
          <AdButton
            type="button"
            $width="217px"
            $height="41px"
            $fontSize="16px"
            $color="#04a34b"
          >
            Learn More
          </AdButton>
          <Choices />
        </Banner>
      </Header>

      <Nav>
        {navItems.map((item) => (
          <NavLink href="#" key={item}>
            {item}
          </NavLink>
        ))}
        <AppLink href="#" $gap="20px">
          <AndroidIcon />
          Get Android App
        </AppLink>
        <AppLink href="#" $gap="30px">
          <ChromeIcon />
          Get Chrome Extension
        </AppLink>
        <IpBox>
          <FaMapMarkerAlt size={15} />
          <span>Your IP : 52.87.44.246</span>
        </IpBox>
      </Nav>

      <Main>
        <CheckPanel>
          <CheckForm onSubmit={(e) => e.preventDefault()}>
            <h2>DNS CHECK</h2>
            <SearchRow>
              <input
                type="text"
                placeholder="example.com"
                aria-label="Domain"
              />
              <SelectBox>
                <select aria-label="Record type" defaultValue="A">
                  <option>A</option>
                </select>
                <svg width="10" height="13" viewBox="0 0 10 13">
                  <path fill="#343a40" d="M0 5.500L5 0l5 5.500zM0 7.500h10L5 13z" />
                </svg>
              </SelectBox>
              <SearchButton type="submit">
                <SearchIcon size={18} color="#fff" />
                Search
              </SearchButton>
              <ToolButton type="button" aria-label="Settings">
                <FaCog size={17} />
              </ToolButton>
              <ToolButton type="button" aria-label="Add server">
                <FaPlus size={16} />
              </ToolButton>
            </SearchRow>
            <OptionsRow>
              <label>
                <input type="checkbox" defaultChecked />
                CD Flag
              </label>
              <label>
                <input type="checkbox" />
                Refresh:
              </label>
              <input
                type="number"
                id="interval"
                aria-label="Refresh interval"
                defaultValue="20"
              />
              <label htmlFor="interval">sec.</label>
            </OptionsRow>
          </CheckForm>

          <ServerList>
            {servers.map(({ flag, name, owner }) => (
              <ServerRow key={name}>
                <div className="info">
                  <div className="name">
                    <Flag code={flag} />
                    {name}
                  </div>
                  <div className="owner">
                    {owner}
                    <InfoIcon />
                  </div>
                </div>
                <span className="result">-</span>
                <TargetIcon />
              </ServerRow>
            ))}
          </ServerList>
        </CheckPanel>

        <Content>
          <h1>CHECK DNS PROPAGATION</h1>
          <p className="intro">
            Recently changed your DNS records, switched web host, or started a
            new website: then you are at the right place!
            <br />
            DNS Checker provides a free DNS lookup service to check Domain Name
            System records against a selected list of
            <br />
            DNS servers located in multiple regions worldwide. Perform a quick
            DNS propagation lookup for any hostname,
            <br />
            and check DNS data collected from all available DNS Servers to
            confirm that the DNS records are fully propagated.
          </p>

          <MapCard>
            <figcaption>DNS Propagation Map by DNSChecker.org</figcaption>
            <MenuButton type="button" aria-label="Chart menu">
              <svg width="20" height="17" viewBox="0 0 20 17">
                <path
                  stroke="#666"
                  strokeWidth="3.500"
                  strokeLinecap="round"
                  d="M2 2.500h16M2 8.500h16M2 14.500h16"
                />
              </svg>
            </MenuButton>
            <WorldMap />
            <Legend>
              <span>
                <svg width="12" height="14" viewBox="-19 -51 38 52">
                  <path d={PIN_PATH} fill="#ff7f00" />
                  <path d="M-8-40H8v15H-8z" fill="#fff" />
                </svg>
                Server Location
              </span>
              <span>
                <svg width="15" height="13" viewBox="0 0 15 13">
                  <path
                    fill="#8fce0c"
                    stroke="#6fae10"
                    strokeWidth=".6"
                    d="M.5 7L3 4.800l2.500 2.700 6-7L14.500 2 7 11.500 5 12.600z"
                  />
                </svg>
                Resolved
              </span>
              <span>
                <svg width="14" height="14" viewBox="0 0 14 14">
                  <path
                    stroke="#f9694f"
                    strokeWidth="4"
                    d="M2 2l10 10M12 2L2 12"
                  />
                </svg>
                Not Resolved
              </span>
            </Legend>
          </MapCard>

          <ListsCard>
            <h2>DNS Lists</h2>
            <form onSubmit={(e) => e.preventDefault()}>
              <input type="text" aria-label="Search DNS lists" />
              <button type="submit" aria-label="Search">
                <SearchIcon size={17} color="#111" />
              </button>
            </form>
          </ListsCard>
        </Content>

        <SideAd>
          <div className="card">
            <h2>
              <span>Find Commerce Email Automation</span>
            </h2>
            <p>
              Easily Search & Compare The Best Ecommerce Email Automation | Get
              Free Results
            </p>
            <small>Email Automation</small>
            <AdButton
              type="button"
              $width="137px"
              $height="36px"
              $fontSize="14px"
              $color="#0a86ff"
            >
              Open
            </AdButton>
          </div>
          <Choices />
        </SideAd>
      </Main>
    </Page>
  )
}

export default App
